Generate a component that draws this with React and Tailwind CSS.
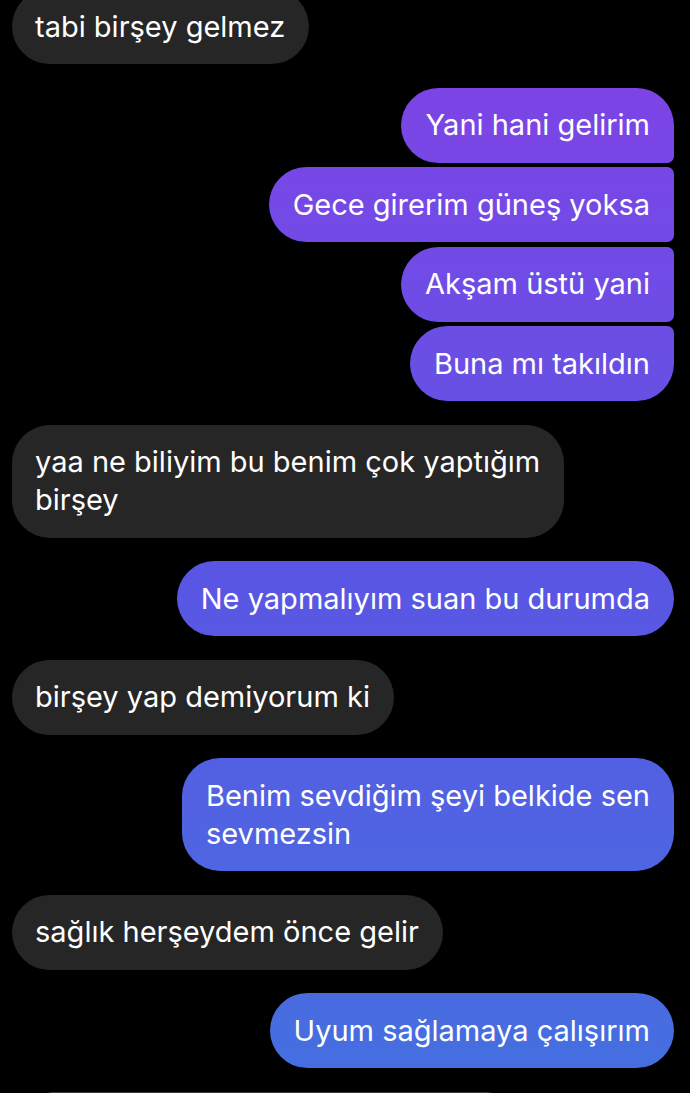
const groups = [
  { side: "in", msgs: [["tabi birşey gelmez"]] },
  {
    side: "out",
    msgs: [
      ["Yani hani gelirim"],
      ["Gece girerim güneş yoksa"],
      ["Akşam üstü yani"],
      ["Buna mı takıldın"],
    ],
  },
  { side: "in", msgs: [["yaa ne biliyim bu benim çok yaptığım", "birşey"]] },
  { side: "out", msgs: [["Ne yapmalıyım suan bu durumda"]] },
  { side: "in", msgs: [["birşey yap demiyorum ki"]] },
  { side: "out", msgs: [["Benim sevdiğim şeyi belkide sen", "sevmezsin"]] },
  { side: "in", msgs: [["sağlık herşeydem önce gelir"]] },
  { side: "out", msgs: [["Uyum sağlamaya çalışırım"]] },
];

function outRadius(i, n) {
  if (n === 1) return "rounded-[38px]";
  if (i === 0) return "rounded-l-[38px] rounded-tr-[38px] rounded-br-[7px]";
  if (i === n - 1) return "rounded-l-[38px] rounded-tr-[7px] rounded-br-[38px]";
  return "rounded-l-[38px] rounded-r-[7px]";
}

function Bubble({ side, lines, radius }) {
  const base = "whitespace-nowrap py-[18.5px] text-[29px] leading-[38px] text-white";
  if (side === "in") {
    return (
      <div className={`${base} ${radius} self-start ml-[12px] bg-[#262626] pl-[23px] pr-[24px]`}>
        {lines.map((l, i) => (
          <div key={i}>{l}</div>
        ))}
      </div>
    );
  }
  return (
    <div
      className={`${base} ${radius} self-end mr-[16px] bg-fixed bg-linear-to-b from-[#8240e6] via-[#5a55e4] via-52% to-[#4370e0] px-[24px]`}
    >
      {lines.map((l, i) => (
        <div key={i}>{l}</div>
      ))}
    </div>
  );
}

export default function App() {
  return (
    <div
      className="flex h-[1093px] w-full flex-col overflow-hidden bg-black"
      style={{ fontFamily: "Inter, 'Noto Sans', sans-serif" }}
    >
      <div className="-mt-[11px] flex flex-col gap-[23.5px]">
        {groups.map((g, gi) => (
          <div key={gi} className="flex flex-col gap-[4.5px]">
            {g.msgs.map((lines, i) => (
              <Bubble
                key={i}
                side={g.side}
                lines={lines}
                radius={g.side === "in" ? "rounded-[38px]" : outRadius(i, g.msgs.length)}
              />
            ))}
          </div>
        ))}
        <div className="ml-[42px] h-[20px] w-[455px] rounded-t-[10px] border-t border-[#3a3a3a] bg-[#1c1c1c]" />
      </div>
    </div>
  );
}
